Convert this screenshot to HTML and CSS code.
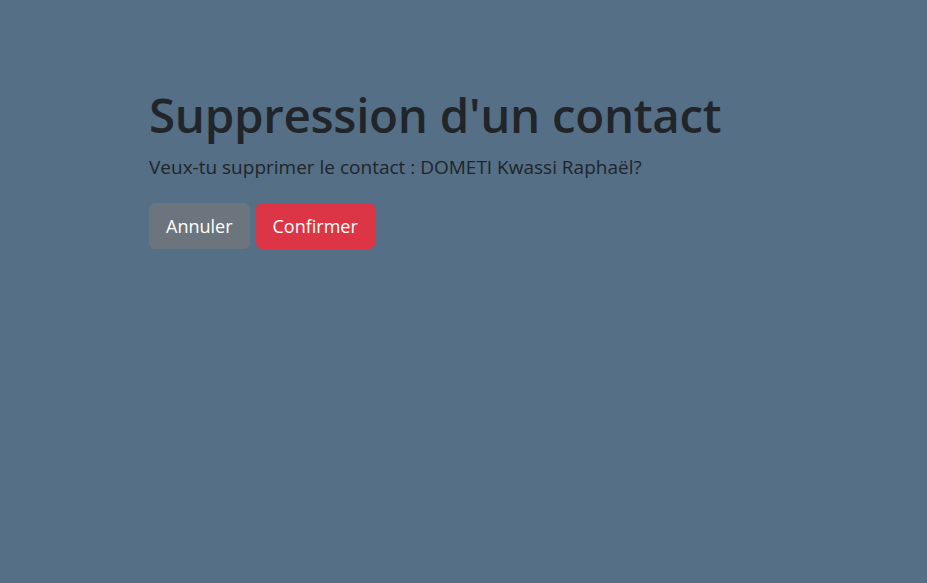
FILE: index.html
```html
<!DOCTYPE html>
<html lang="fr">
<head>
<meta charset="utf-8">
<title>Suppression d'un contact</title>
<link rel="stylesheet" href="styles.css">
</head>
<body>
<main class="page">
  <section class="panel">
    <h1 class="title">Suppression d'un contact</h1>
    <p class="lead">Veux-tu supprimer le contact : DOMETI Kwassi Raphaël?</p>
    <div class="actions">
      <a class="btn btn-secondary" href="#">Annuler</a>
      <button class="btn btn-danger" type="button">Confirmer</button>
    </div>
  </section>
</main>
</body>
</html>
```
FILE: styles.css
```css
html, body {
  margin: 0;
  padding: 0;
  background: #546f86;
  height: 100%;
}
body {
  font-family: "Open Sans", "Noto Sans", sans-serif;
  color: #212529;
}
.page {
  padding: 86px 0 0 149px;
}
.title {
  margin: 0;
  font-size: 47.5px;
  font-weight: 600;
  line-height: 57px;
  letter-spacing: -0.3px;
}
.lead {
  margin: 10px 0 0 0;
  font-size: 19px;
  font-weight: 400;
  line-height: 28px;
}
.actions {
  display: flex;
  gap: 6px;
  margin-top: 22px;
}
.btn {
  display: inline-block;
  font-family: inherit;
  font-size: 18px;
  line-height: 30px;
  padding: 7px 16px;
  border: 1px solid transparent;
  border-radius: 6px;
  color: #fff;
  text-decoration: none;
  cursor: pointer;
}
.btn-secondary {
  background: #6c757d;
  border-color: #6c757d;
}
.btn-danger {
  background: #dc3545;
  border-color: #dc3545;
}
```
